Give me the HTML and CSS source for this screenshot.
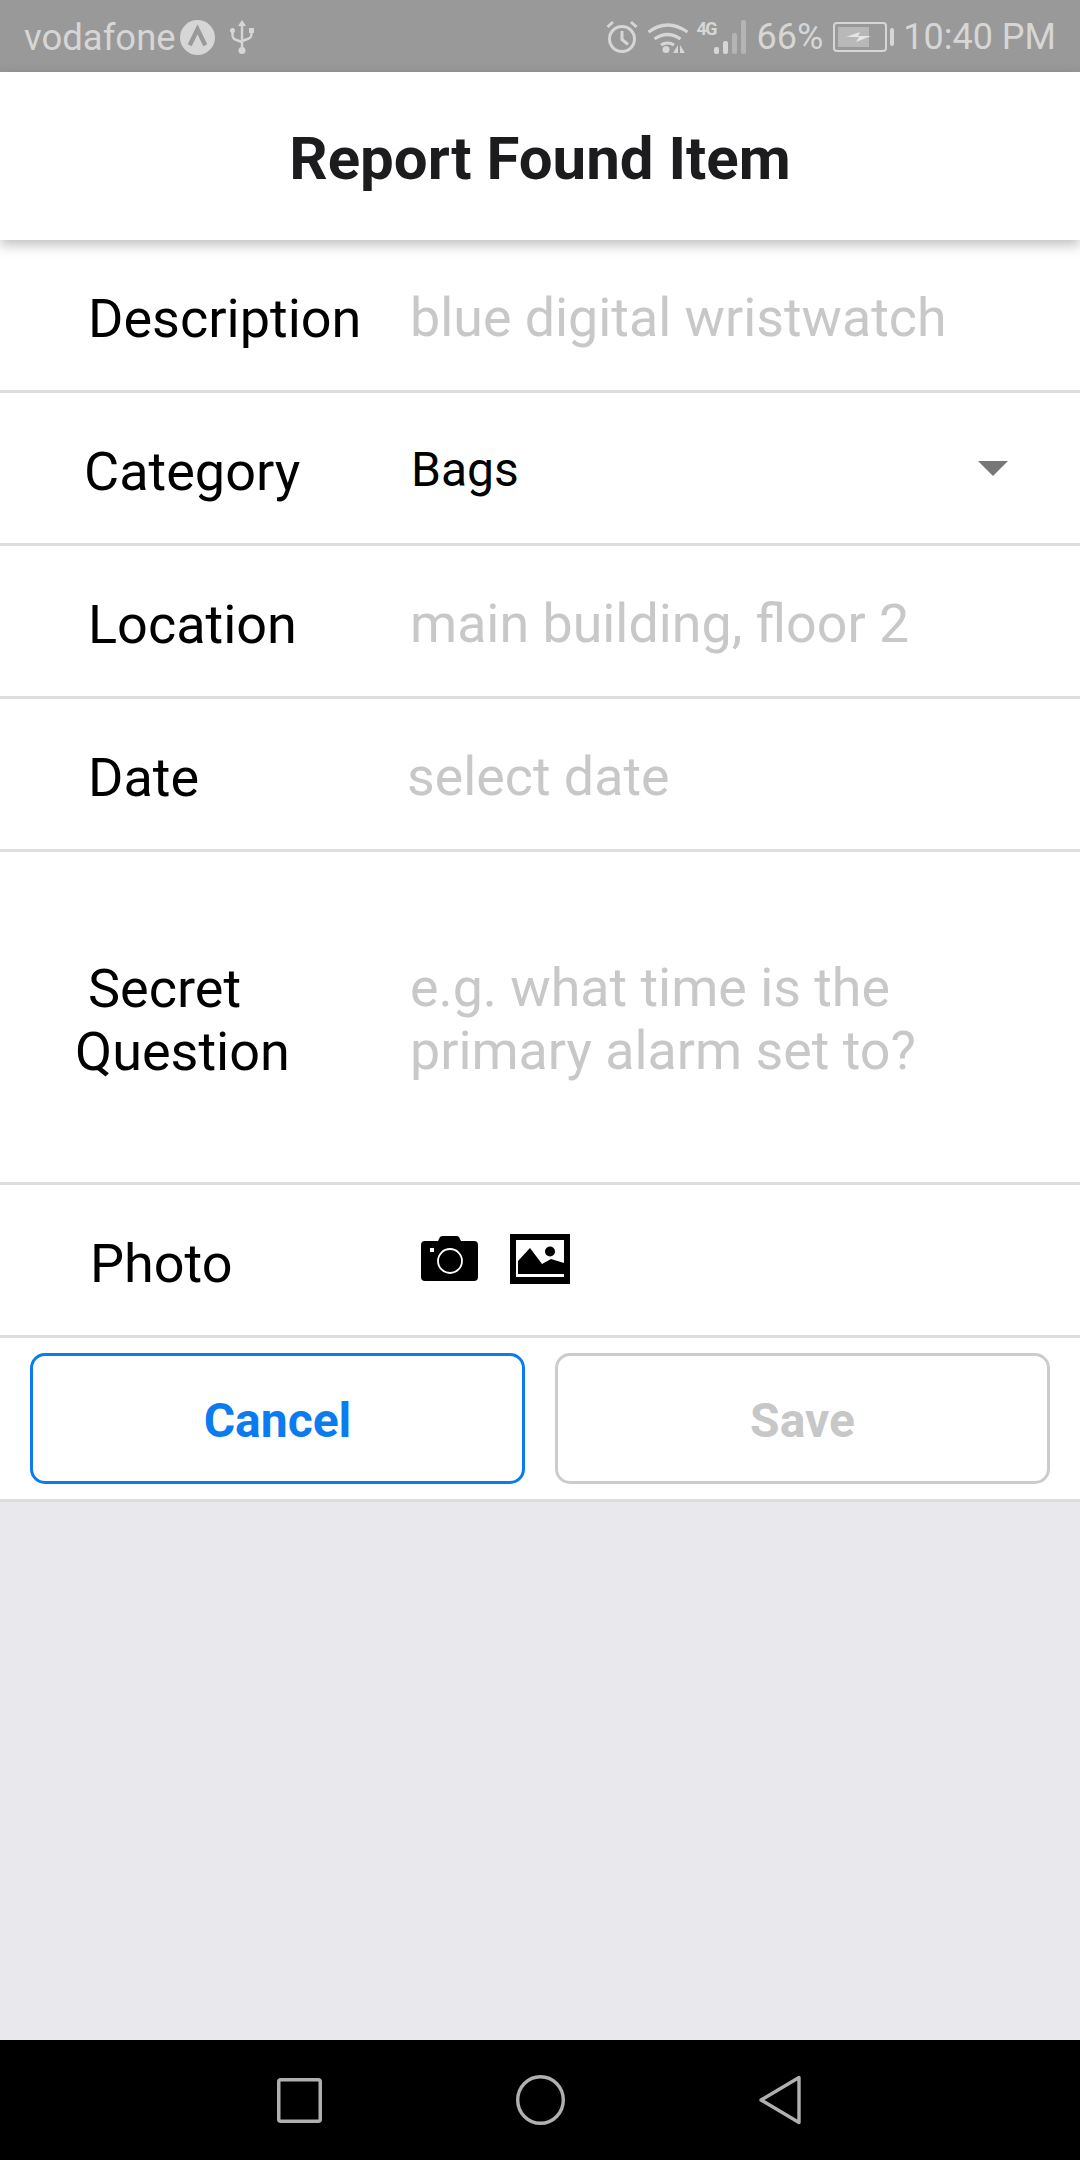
FILE: index.html
```html
<!DOCTYPE html>
<html lang="en">
<head>
<meta charset="utf-8">
<title>Report Found Item</title>
<link rel="stylesheet" href="styles.css">
</head>
<body>
<div class="screen">
  <div class="status">
    <span class="carrier">vodafone</span>
    <svg class="ic-badge" viewBox="0 0 36 36"><circle cx="18" cy="18" r="18" fill="#d6d6d6"/><path d="M10 26 18 9.500 26 26" fill="none" stroke="#999" stroke-width="4.500"/></svg>
    <svg class="ic-usb" viewBox="0 0 24 34"><g fill="none" stroke="#d6d6d6" stroke-width="2.400"><path d="M12 4v26"/><path d="M2.500 10v5q0 4 4 5l5.500 2"/><path d="M21.500 10v4q0 4-4 5l-5.500 2"/></g><path d="M12 0l4 6H8z" fill="#d6d6d6"/><circle cx="12" cy="30.500" r="3.500" fill="#d6d6d6"/><rect x="0" y="8" width="5" height="5" rx="2.500" fill="#d6d6d6"/><rect x="19" y="8" width="5" height="5" fill="#d6d6d6"/></svg>
    <span class="spacer"></span>
    <svg class="ic-alarm" viewBox="0 0 32 34"><g fill="none" stroke="#d6d6d6" stroke-width="3"><circle cx="16" cy="19" r="12.500"/><path d="M16 11v8.500l6 5"/><path d="M1.500 7 7 2"/><path d="M30.500 7 25 2"/></g></svg>
    <svg class="ic-wifi" viewBox="0 0 42 33"><g fill="none" stroke="#d6d6d6" stroke-width="3.200"><path d="M1.500 11q19-14 39 0"/><path d="M7.500 18q13-9 26 0"/><path d="M14 24q6.500-4 13 0"/></g><circle cx="19" cy="28.500" r="3.500" fill="#d6d6d6"/><path d="M31 24v8h-5zM33 24v8h5z" fill="#d6d6d6"/></svg>
    <span class="net">4G</span>
    <svg class="ic-signal" viewBox="0 0 36 34"><rect x="0" y="27" width="5" height="7" rx="2" fill="#d6d6d6"/><rect x="9" y="21" width="5" height="13" rx="2" fill="#d6d6d6"/><rect x="18" y="13" width="5" height="21" rx="2" fill="#b4b4b4"/><rect x="27" y="0" width="5" height="34" rx="2" fill="#b4b4b4"/></svg>
    <span class="pct">66%</span>
    <svg class="ic-batt" viewBox="0 0 62 30"><rect x="1" y="1" width="52" height="28" rx="3" fill="none" stroke="#d6d6d6" stroke-width="2"/><rect x="5" y="5" width="31" height="20" fill="#b8b8b8"/><path d="M13 15l14-5-2 4h13l-15 6 3-5z" fill="#e6e6e6"/><rect x="57" y="6" width="4" height="18" rx="2" fill="#d6d6d6"/></svg>
    <span class="time">10:40 PM</span>
  </div>

  <header class="header"><h1 class="title">Report Found Item</h1></header>

  <main class="form">
    <div class="row">
      <span class="label l-desc">Description</span>
      <span class="value placeholder v-desc">blue digital wristwatch</span>
    </div>
    <div class="row">
      <span class="label l-cat">Category</span>
      <span class="value v-cat">Bags</span>
      <svg class="caret" viewBox="0 0 30 15"><path d="M0 0h30L15 15z" fill="#777"/></svg>
    </div>
    <div class="row">
      <span class="label l-desc">Location</span>
      <span class="value placeholder v-desc">main building, floor 2</span>
    </div>
    <div class="row">
      <span class="label l-desc">Date</span>
      <span class="value placeholder v-date">select date</span>
    </div>
    <div class="row row-tall">
      <span class="label l-q"><span class="l-secret">Secret</span><span class="l-line">Question</span></span>
      <span class="value placeholder v-q"><span class="l-line">e.g. what time is the</span><span class="l-line">primary alarm set to?</span></span>
    </div>
    <div class="row">
      <span class="label l-photo">Photo</span>
      <div class="photo-icons">
        <svg class="ic-camera" viewBox="0 0 57 45"><path d="M4 5h13l2-4q1-1 3-1h13q2 0 3 1l2 4h13q4 0 4 4v32q0 4-4 4H4q-4 0-4-4V9q0-4 4-4z" fill="#000"/><rect x="9" y="12" width="4" height="4" fill="#fff"/><circle cx="29" cy="25" r="12" fill="none" stroke="#fff" stroke-width="1.800"/></svg>
        <svg class="ic-image" viewBox="0 0 60 50"><rect width="60" height="50" fill="#000"/><rect x="6" y="6" width="48" height="37" fill="#fff"/><path d="M8 27 20 14l12 16 9-5 13 4v11H8z" fill="#000"/><circle cx="40" cy="17.500" r="5" fill="#000"/></svg>
      </div>
    </div>
    <div class="actions">
      <button class="btn btn-cancel" type="button">Cancel</button>
      <button class="btn btn-save" type="button">Save</button>
    </div>
  </main>

  <div class="fill"></div>

  <nav class="nav">
    <svg class="nav-sq" viewBox="0 0 45 45"><rect x="1.750" y="1.750" width="41.500" height="41.500" rx="2" fill="none" stroke="#b0b0b0" stroke-width="3.500"/></svg>
    <svg class="nav-ci" viewBox="0 0 49 50"><ellipse cx="24.500" cy="25" rx="22.800" ry="23.300" fill="none" stroke="#b0b0b0" stroke-width="3.400"/></svg>
    <svg class="nav-tr" viewBox="0 0 42 50"><path d="M40 2.500v45L2 25z" fill="none" stroke="#b0b0b0" stroke-width="3.400" stroke-linejoin="round"/></svg>
  </nav>
</div>
</body>
</html>
```
FILE: styles.css
```css
* { box-sizing: border-box; }
html, body { margin: 0; padding: 0; }
body { font-family: Roboto, "Noto Sans", sans-serif; background: #e8e8ed; }
.screen { width: 1080px; height: 2160px; display: flex; flex-direction: column; overflow: hidden; }

.status { height: 72px; background: #999; color: #d6d6d6; display: flex; align-items: center; padding: 2px 24px 0; font-size: 36px; flex: none; }
.carrier { margin-right: 4px; font-size: 36.500px; }
.spacer { flex: 1; }
.ic-badge { width: 35px; height: 35px; margin-right: 15px; }
.ic-usb { width: 24px; height: 34px; }
.ic-alarm { width: 32px; height: 34px; margin-right: 9px; }
.ic-wifi { width: 42px; height: 33px; margin-right: 7px; }
.net { font-size: 18px; font-weight: 700; align-self: flex-start; margin-top: 16px; width: 18px; letter-spacing: -1.500px; }
.ic-signal { width: 36px; height: 34px; margin-right: 6px; }
.pct { margin-right: 10px; }
.ic-batt { width: 62px; height: 30px; margin-right: 8px; }

.header { height: 168px; background: #fff; display: flex; align-items: center; justify-content: center; flex: none; box-shadow: 0 5px 12px rgba(0,0,0,.25); position: relative; z-index: 1; padding-top: 6px; }
.title { margin: 0; font-size: 60px; font-weight: 700; color: #1c1c1e; line-height: 1; }

.form { background: #fff; flex: none; }
.row { height: 153px; border-bottom: 3px solid #ddd; display: flex; align-items: center; font-size: 54px; }
.row-tall { height: 333px; }
.label { color: #000; display: block; flex: none; line-height: 63px; padding-top: 6px; }
.value { font-size: 53.750px; line-height: 63px; padding-top: 4px; }
.placeholder { color: #c8c8c8; }
.l-line { display: block; }
.l-desc { width: 410px; padding-left: 88px; }
.l-cat { width: 412px; padding-left: 84px; }
.l-q { width: 410px; padding-left: 75px; }
.l-secret { display: block; padding-left: 13px; }
.l-photo { width: 421px; padding-left: 90px; }
.v-cat { color: #000; font-size: 48px; flex: 1; margin-left: -1px; padding-top: 2px; }
.v-date { margin-left: -3px; }
.caret { width: 30px; height: 15px; margin-right: 72px; }
.photo-icons { display: flex; align-items: center; gap: 32px; padding-bottom: 3px; }
.ic-camera { width: 57px; height: 45px; }
.ic-image { width: 60px; height: 50px; }

.actions { height: 164px; border-bottom: 3px solid #ddd; display: flex; gap: 30px; padding: 15px 30px 15px 30px; }
.btn { flex: 1; background: #fff; border-radius: 15px; font-family: Roboto, sans-serif; font-size: 48px; font-weight: 700; padding: 3px 0 0; }
.btn-cancel { border: 3px solid #0a7cef; color: #0a7cef; }
.btn-save { border: 3px solid #ccc; color: #c7c7c7; }

.fill { flex: 1; background: #e8e8ed; }
.nav { height: 120px; background: #000; flex: none; display: flex; align-items: center; justify-content: center; gap: 194px; padding-right: 2px; }
.nav-sq { width: 45px; height: 45px; }
.nav-ci { width: 49px; height: 50px; }
.nav-tr { width: 42px; height: 50px; }
```
